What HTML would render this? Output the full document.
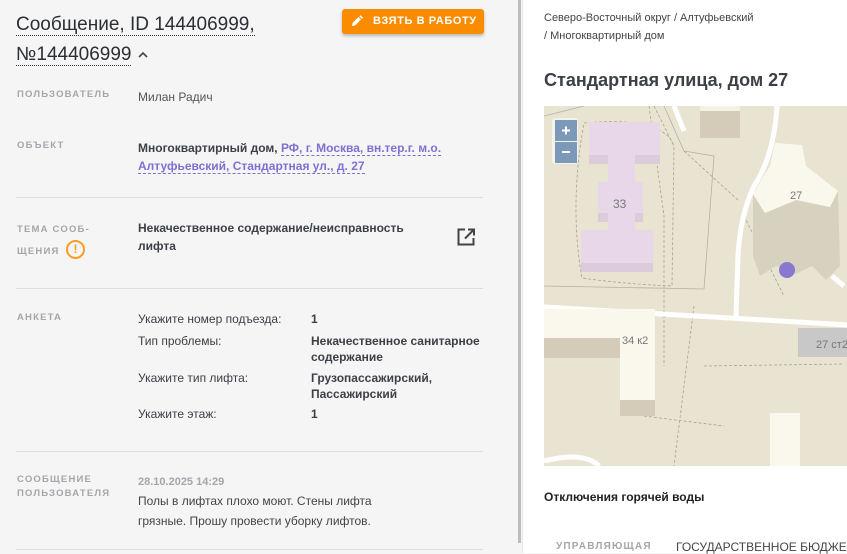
<!DOCTYPE html>
<html><head><meta charset="utf-8"><style>
*{margin:0;padding:0;box-sizing:border-box}
body{width:847px;height:553px;overflow:hidden;background:#f5f5f5;font-family:"Liberation Sans","Noto Sans CJK SC",sans-serif;position:relative;color:#3c4047}
.a{position:absolute}
.lbl{position:absolute;left:17px;font-size:9.5px;font-weight:bold;letter-spacing:1.2px;color:#a3a6ab;line-height:14px}
.v{position:absolute;left:138px;font-size:12px;line-height:18px}
.b{font-weight:bold}
.hr{position:absolute;left:16px;width:467px;height:1px;background:#dedede}
.lnk{color:#8170d0;border-bottom:1px dashed #8170d0}
</style></head><body>
<div class="a" style="left:16px;top:10px;font-size:19px;line-height:30px;color:#2b2e33;width:300px"><span style="border-bottom:1.5px dotted #333">Сообщение, ID 144406999,</span><br><span style="border-bottom:1.5px dotted #333">№144406999</span> <svg width="12" height="10" viewBox="0 0 12 10" style="vertical-align:middle"><path d="M2 7l4-4 4 4" stroke="#444" stroke-width="1.6" fill="none"/></svg></div>
<div class="a" style="left:342px;top:9px;width:142px;height:25px;background:#fb8c00;border-radius:3px;box-shadow:0 2px 3px rgba(0,0,0,.25);color:#fff;font-size:11px;font-weight:bold;letter-spacing:.6px;line-height:25px;padding-left:31px">ВЗЯТЬ В РАБОТУ
<svg class="a" style="left:9px;top:6px" width="12" height="12" viewBox="0 0 12 12"><path d="M1 11l0.5-3 6-6 2.5 2.5-6 6z M8.3 1.2l1.2-1 2.5 2.5-1 1.2z" fill="#fff"/></svg></div>

<div class="lbl" style="top:88px">ПОЛЬЗОВАТЕЛЬ</div>
<div class="v" style="top:88px;color:#555">Милан Радич</div>
<div class="lbl" style="top:139px">ОБЪЕКТ</div>
<div class="v b" style="top:139px;width:320px">Многоквартирный дом, <span class="lnk">РФ, г. Москва, вн.тер.г. м.о.</span><br><span class="lnk">Алтуфьевский, Стандартная ул., д. 27</span></div>
<div class="hr" style="top:197px"></div>
<div class="lbl" style="top:219px;line-height:22px">ТЕМА СООБ-<br>ЩЕНИЯ</div>
<div class="a" style="left:66px;top:240px;width:19px;height:19px;border:2px solid #fb9c2a;border-radius:50%;color:#fb9c2a;font-size:12px;font-weight:bold;text-align:center;line-height:15px">!</div>
<div class="v b" style="top:219px">Некачественное содержание/неисправность<br>лифта</div>
<svg class="a" style="left:457px;top:228px" width="19" height="18" viewBox="0 0 19 18"><path d="M8 1.5H1.5v15h15V10" stroke="#444" stroke-width="2" fill="none"/><path d="M11 1.5h6v6M17 1.5L8 10.5" stroke="#444" stroke-width="2" fill="none"/></svg>
<div class="hr" style="top:288px"></div>
<div class="lbl" style="top:311px">АНКЕТА</div>
<div class="v" style="top:310px">Укажите номер подъезда:</div><div class="v b" style="top:310px;left:311px">1</div>
<div class="v" style="top:332px">Тип проблемы:</div><div class="v b" style="left:311px;line-height:16px;top:333px">Некачественное санитарное<br>содержание</div>
<div class="v" style="top:369px">Укажите тип лифта:</div><div class="v b" style="top:370px;left:311px;line-height:16px">Грузопассажирский,<br>Пассажирский</div>
<div class="v" style="top:405px">Укажите этаж:</div><div class="v b" style="top:405px;left:311px">1</div>
<div class="hr" style="top:451px"></div>
<div class="lbl" style="top:473px">СООБЩЕНИЕ<br>ПОЛЬЗОВАТЕЛЯ</div>
<div class="v b" style="top:473px;color:#a3a6ab;font-size:11px">28.10.2025 14:29</div>
<div class="v" style="top:491px;line-height:20px;color:#444">Полы в лифтах плохо моют. Стены лифта<br>грязные. Прошу провести уборку лифтов.</div>
<div class="hr" style="top:549px"></div>
<div class="a" style="left:518px;top:0;width:3px;height:543px;background:#bdbdbd"></div>

<div class="a" style="left:522px;top:0;width:325px;height:553px;background:#fff;border-left:1px solid #e6e6e6">
<div class="a" style="left:21px;top:9px;font-size:11px;line-height:18px;color:#444">Северо-Восточный округ / Алтуфьевский<br>/ Многоквартирный дом</div>
<div class="a" style="left:21px;top:70px;font-size:18px;font-weight:bold;color:#3c4047">Стандартная улица, дом 27</div>
<svg class="a" style="left:21px;top:106px" width="304" height="360" viewBox="0 0 304 360" font-family="Liberation Sans">
<rect width="304" height="360" fill="#e9e4d2"/>
<path d="M0 10L40 0M0 180L160 183L170 50L140 45L120 0" stroke="#b5b0a0" stroke-width="0.8" fill="none"/>
<path d="M40 17Q120 10 130 40L128 180Q80 178 38 172Q25 100 40 17M105 0L120 110L120 260M110 0L130 40M140 45L195 95M150 200L130 360M160 260L300 258M100 310L180 320M200 110L240 190" stroke="#a8a390" stroke-width="0.8" stroke-dasharray="3 2" fill="none"/>
<path d="M0 201L304 219M233 0Q230 50 210 80Q196 110 194 150L192 210M130 0L140 25M0 355Q40 345 55 360M288 170L300 180" stroke="#fff" stroke-width="5" fill="none"/>
<path d="M45 16H116V49H91V76H99V107H91V124H109V157H37V124H64V107H54V76H64V49H45Z" fill="#dccbdb" transform="translate(0,9)"/>
<path d="M45 16H116V49H91V76H99V107H91V124H109V157H37V124H64V107H54V76H64V49H45Z" fill="#e8d7e8"/>
<text x="69" y="102" font-size="12" fill="#777">33</text>
<rect x="156" y="0" width="40" height="32" fill="#d4cbb8"/><rect x="156" y="0" width="40" height="5" fill="#f5f1e3"/>
<path d="M209 88L221 107L252 94L286 101L294 85L296 160L282 174L268 160L252 168L232 160L216 170L209 150Z" fill="#d7d1bf"/>
<path d="M231 37L258 39L262 60L294 85L286 101L252 94L221 107L209 88L226 60Z" fill="#faf8ec"/>
<text x="246" y="93" font-size="11" fill="#777">27</text>
<circle cx="243" cy="164" r="8" fill="#8878d0"/>
<rect x="0" y="232" width="76" height="20" fill="#d4cbb8"/>
<rect x="76" y="294" width="35" height="16" fill="#d4cbb8"/>
<path d="M0 203h111v91h-35v-62h-76z" fill="#faf8ec"/>
<text x="78" y="238" font-size="11" fill="#777">34 к2</text>
<rect x="254" y="222" width="50" height="29" fill="#c8c8c8"/>
<text x="272" y="242" font-size="11" fill="#777">27 ст2</text>
<rect x="226" y="307" width="30" height="53" fill="#faf8ec"/>
<rect x="8" y="12" width="26" height="46" rx="3" fill="#fff" opacity=".5"/>
<rect x="11" y="14" width="22" height="21" fill="#7d99b9"/><rect x="11" y="36" width="22" height="21" fill="#7d99b9"/>
<path d="M18 24.5h8M22 20.5v8M18 46h8" stroke="#fff" stroke-width="2"/>
</svg>
<div class="a" style="left:21px;top:490px;font-size:12px;font-weight:bold;color:#222">Отключения горячей воды</div>
<div class="a" style="left:33px;top:541px;font-size:10px;font-weight:bold;letter-spacing:1.2px;color:#a3a6ab">УПРАВЛЯЮЩАЯ</div>
<div class="a" style="left:153px;top:540px;font-size:12px;color:#444;white-space:nowrap">ГОСУДАРСТВЕННОЕ БЮДЖЕТНОЕ</div>
</div>
</body></html>
